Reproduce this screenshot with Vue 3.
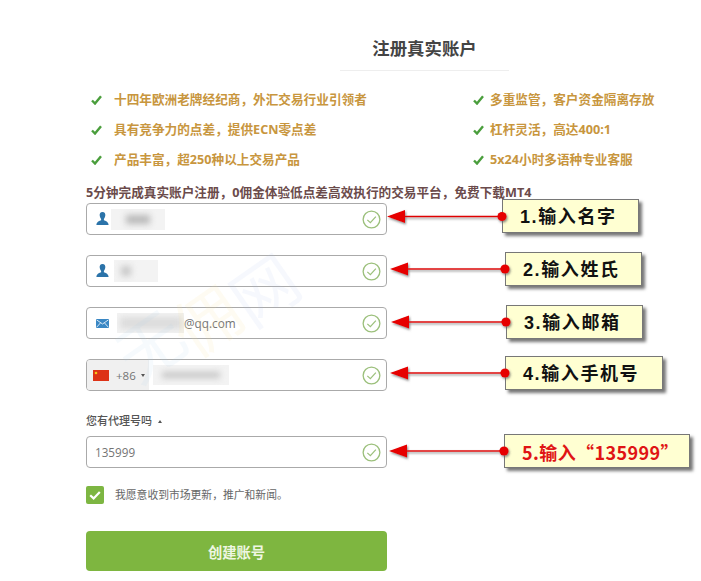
<template>
  <div class="page">
    <h1 class="title">注册真实账户</h1>

    <div class="features">
      <ul v-for="(col, i) in featureCols" :key="i" class="feature-col" :class="i ? 'right' : 'left'">
        <li v-for="text in col" :key="text" class="feature">
          <svg class="tick" viewBox="0 0 11 10" width="11" height="10">
            <path d="M1 5.5 L4 8.5 L10 1.2" fill="none" stroke="#4a9e3c" stroke-width="2.4" />
          </svg>
          <span class="feature-text">{{ text }}</span>
        </li>
      </ul>
    </div>

    <p class="promo">5分钟完成真实账户注册，0佣金体验低点差高效执行的交易平台，免费下载MT4</p>

    <form class="form" @submit.prevent>
      <div class="field">
        <svg class="icon user" viewBox="0 0 13 13" width="13" height="13">
          <path d="M6.5 0 C8.6 0 9.6 1.6 9.3 3.6 C9.1 5.1 8.5 6.2 7.9 6.9 L7.9 8.2 C9.6 8.9 12.4 9.5 12.6 13 L0.4 13 C0.6 9.5 3.4 8.9 5.1 8.2 L5.1 6.9 C4.5 6.2 3.9 5.1 3.7 3.6 C3.4 1.6 4.4 0 6.5 0 Z" fill="#2b73a9" />
        </svg>
        <span class="mask mask-first"><i></i></span>
        <svg class="ok" viewBox="0 0 20 20" width="19" height="19">
          <circle cx="10" cy="10" r="8.8" fill="none" stroke="#9cc07c" stroke-width="1.4" />
          <path d="M5.6 10.4 L8.8 13.4 L14.6 7" fill="none" stroke="#9cc07c" stroke-width="1.3" />
        </svg>
      </div>

      <div class="field">
        <svg class="icon user" viewBox="0 0 13 13" width="13" height="13">
          <path d="M6.5 0 C8.6 0 9.6 1.6 9.3 3.6 C9.1 5.1 8.5 6.2 7.9 6.9 L7.9 8.2 C9.6 8.9 12.4 9.5 12.6 13 L0.4 13 C0.6 9.5 3.4 8.9 5.1 8.2 L5.1 6.9 C4.5 6.2 3.9 5.1 3.7 3.6 C3.4 1.6 4.4 0 6.5 0 Z" fill="#2b73a9" />
        </svg>
        <span class="mask mask-last"><i></i></span>
        <svg class="ok" viewBox="0 0 20 20" width="19" height="19">
          <circle cx="10" cy="10" r="8.8" fill="none" stroke="#9cc07c" stroke-width="1.4" />
          <path d="M5.6 10.4 L8.8 13.4 L14.6 7" fill="none" stroke="#9cc07c" stroke-width="1.3" />
        </svg>
      </div>

      <div class="field">
        <svg class="icon" viewBox="0 0 13 9" width="13" height="9">
          <rect width="13" height="9" fill="#3a87c4" />
          <path d="M0.5 0.8 L6.5 5 L12.5 0.8 M0.5 8.4 L4.6 3.8 M12.5 8.4 L8.4 3.8" fill="none" stroke="#e6f1f9" stroke-width="0.9" />
        </svg>
        <span class="mask mask-mail"><i></i></span>
        <span class="value">@qq.com</span>
        <svg class="ok" viewBox="0 0 20 20" width="19" height="19">
          <circle cx="10" cy="10" r="8.8" fill="none" stroke="#9cc07c" stroke-width="1.4" />
          <path d="M5.6 10.4 L8.8 13.4 L14.6 7" fill="none" stroke="#9cc07c" stroke-width="1.3" />
        </svg>
      </div>

      <div class="field phone">
        <div class="prefix">
          <svg viewBox="0 0 16 11" width="16" height="11">
            <rect width="16" height="11" fill="#dd3216" />
            <circle cx="3" cy="3" r="1.3" fill="#f5c518" />
          </svg>
          <span class="code">+86</span>
          <span class="caret"></span>
        </div>
        <span class="mask mask-phone"><i></i></span>
        <svg class="ok" viewBox="0 0 20 20" width="19" height="19">
          <circle cx="10" cy="10" r="8.8" fill="none" stroke="#9cc07c" stroke-width="1.4" />
          <path d="M5.6 10.4 L8.8 13.4 L14.6 7" fill="none" stroke="#9cc07c" stroke-width="1.3" />
        </svg>
      </div>

      <div class="agent-label">您有代理号吗 <span class="caret-up"></span></div>

      <div class="field agent">
        <span class="value">135999</span>
        <svg class="ok" viewBox="0 0 20 20" width="19" height="19">
          <circle cx="10" cy="10" r="8.8" fill="none" stroke="#9cc07c" stroke-width="1.4" />
          <path d="M5.6 10.4 L8.8 13.4 L14.6 7" fill="none" stroke="#9cc07c" stroke-width="1.3" />
        </svg>
      </div>

      <div class="agree">
        <span class="box">
          <svg viewBox="0 0 18 18" width="18" height="18">
            <path d="M4.2 9.2 L7.6 12.4 L13.8 6" fill="none" stroke="#fff" stroke-width="2.2" />
          </svg>
        </span>
        <span>我愿意收到市场更新，推广和新闻。</span>
      </div>

      <button class="submit" type="submit">创建账号</button>
    </form>

    <!-- 水印 -->
    <span class="mark mark-a">无</span>
    <span class="mark mark-b">佣</span>
    <span class="mark mark-c">网</span>

    <!-- 标注 -->
    <div
      v-for="c in callouts"
      :key="c.text"
      class="callout"
      :class="{ hot: c.hot }"
      :style="{ left: c.x + 'px', top: c.y + 'px', width: c.w + 'px' }"
    >{{ c.text }}</div>

    <svg class="arrows" viewBox="0 0 701 581" width="701" height="581">
      <defs>
        <filter id="soft" x="-20%" y="-50%" width="140%" height="200%">
          <feDropShadow dx="1" dy="1.5" stdDeviation="0.8" flood-color="#555" flood-opacity="0.7" />
        </filter>
      </defs>
      <g v-for="c in callouts" :key="c.text" filter="url(#soft)">
        <line :x1="c.tip + 15" :y1="c.ay" :x2="c.x" :y2="c.ay" stroke="#e00000" stroke-width="1.4" />
        <path :d="`M${c.tip} ${c.ay} L${c.tip + 18} ${c.ay - 6.5} L${c.tip + 18} ${c.ay + 6.5} Z`" fill="#e60000" />
        <circle :cx="c.x" :cy="c.ay" r="4.6" fill="#e60000" />
      </g>
    </svg>
  </div>
</template>

<script setup>
const featureCols = [
  ['十四年欧洲老牌经纪商，外汇交易行业引领者', '具有竞争力的点差，提供ECN零点差', '产品丰富，超250种以上交易产品'],
  ['多重监管，客户资金隔离存放', '杠杆灵活，高达400:1', '5x24小时多语种专业客服']
]

const callouts = [
  { text: '1.输入名字', x: 502, y: 199, w: 137, tip: 387, ay: 216.5 },
  { text: '2.输入姓氏', x: 505, y: 252, w: 137, tip: 390, ay: 269 },
  { text: '3.输入邮箱', x: 506, y: 305, w: 137, tip: 391, ay: 322 },
  { text: '4.输入手机号', x: 505, y: 356, w: 158, tip: 390, ay: 373 },
  { text: '5.输入“135999”', x: 504, y: 434, w: 186, tip: 389, ay: 451, hot: true }
]
</script>

<style scoped>
.page {
  position: relative;
  width: 701px;
  height: 581px;
  overflow: hidden;
  background: #fff;
  font-family: "Open Sans", "Noto Sans CJK SC", sans-serif;
}

.title {
  width: 169px;
  margin: 0 0 0 340px;
  padding: 37px 0 11px;
  border-bottom: 1px solid #eee;
  font-size: 17.4px;
  line-height: 22px;
  font-weight: 700;
  color: #444;
  text-align: center;
}

.features {
  display: flex;
  margin: 14px 0 0 91px;
}

.feature-col {
  margin: 0;
  padding: 0;
  list-style: none;
}

.feature-col.left {
  width: 382px;
}

.feature {
  display: flex;
  align-items: center;
  height: 30px;
  font-size: 12.65px;
  font-weight: 700;
  color: #c8963e;
}

.feature-text {
  margin-bottom: 3px;
}

.left .tick {
  margin-right: 12px;
}

.right .tick {
  margin-right: 6px;
}

.promo {
  margin: 9px 0 0 86px;
  font-size: 12.65px;
  line-height: 16px;
  font-weight: 700;
  color: #6b4b4b;
  white-space: nowrap;
}

.form {
  width: 301px;
  margin: 3px 0 0 86px;
}

.field {
  display: flex;
  align-items: center;
  box-sizing: border-box;
  height: 32px;
  margin-bottom: 20px;
  padding: 0 5px 0 9px;
  border: 1px solid #aaa;
  border-radius: 4px;
  font-size: 11.8px;
  color: #747474;
}

.icon {
  flex: none;
}

.icon.user {
  margin-bottom: 2px;
}

.ok {
  flex: none;
  margin-left: auto;
}

.value {
  line-height: 20px;
}

.mask {
  display: flex;
  align-items: center;
  justify-content: center;
  flex: none;
  overflow: hidden;
  background: #f3f3f3;
}

.mask i {
  display: block;
  background: #b9b9b9;
  filter: blur(3px);
}

.mask-first {
  width: 54px;
  height: 21px;
  margin-left: 2px;
}

.mask-first i {
  width: 24px;
  height: 9px;
}

.mask-last {
  width: 44px;
  height: 22px;
  margin-left: 5px;
}

.mask-last i {
  width: 10px;
  height: 10px;
  margin-right: 20px;
  background: #c8c8c8;
}

.mask-mail {
  width: 67px;
  height: 20px;
  margin-left: 8px;
}

.mask-mail i {
  width: 62px;
  height: 12px;
  background: #dcdcdc;
}

.phone {
  padding-left: 0;
}

.prefix {
  display: flex;
  align-items: center;
  flex: none;
  align-self: stretch;
  box-sizing: border-box;
  width: 62px;
  padding-left: 6px;
  border-radius: 3px 0 0 3px;
  background: #f0f0f0;
}

.code {
  margin-left: 7px;
  font-size: 11.5px;
}

.caret {
  width: 0;
  height: 0;
  margin-left: 5px;
  border-top: 3px solid #555;
  border-left: 2.5px solid transparent;
  border-right: 2.5px solid transparent;
}

.mask-phone {
  width: 76px;
  height: 20px;
  margin-left: 4px;
}

.mask-phone i {
  width: 58px;
  height: 6px;
  background: #c4c4c4;
}

.agent-label {
  margin-top: 22px;
  font-size: 11px;
  line-height: 16px;
  font-weight: 500;
  color: #555;
}

.caret-up {
  display: inline-block;
  width: 0;
  height: 0;
  margin-left: 3px;
  vertical-align: 2px;
  border-bottom: 3px solid #555;
  border-left: 2.5px solid transparent;
  border-right: 2.5px solid transparent;
}

.agent {
  margin: 7px 0 0;
  padding-left: 8px;
}

.agent .value {
  font-size: 11.7px;
}

.agree {
  display: flex;
  align-items: center;
  margin-top: 18px;
  font-size: 10.8px;
  line-height: 18px;
  color: #666;
}

.box {
  flex: none;
  width: 18px;
  height: 18px;
  margin-right: 11px;
  border-radius: 2px;
  background: #7db642;
}

.box svg {
  display: block;
}

.submit {
  display: block;
  width: 100%;
  height: 40px;
  margin-top: 27px;
  border: 0;
  border-radius: 4px;
  background: #7eb640;
  font-family: inherit;
  font-size: 14.3px;
  font-weight: 700;
  color: #eef6e2;
}

.mark {
  position: absolute;
  font-size: 66px;
  line-height: 66px;
  font-weight: 400;
  transform: rotate(-35deg);
  pointer-events: none;
}

.mark-a {
  left: 117px;
  top: 312px;
  color: rgba(170, 205, 240, 0.1);
}

.mark-b {
  left: 173px;
  top: 287px;
  color: rgba(245, 220, 150, 0.12);
}

.mark-c {
  left: 231px;
  top: 256px;
  color: rgba(170, 190, 235, 0.1);
}

.callout {
  position: absolute;
  box-sizing: border-box;
  height: 34px;
  padding-left: 17px;
  border: 1px solid #777;
  background: #ffffd2;
  box-shadow: 3px 3px 3px #777;
  font-family: "Liberation Sans", "Noto Sans CJK SC", sans-serif;
  font-size: 18px;
  line-height: 35px;
  font-weight: 700;
  letter-spacing: 1.6px;
  color: #111;
  white-space: nowrap;
}

.callout.hot {
  font-family: "Noto Sans CJK SC", "Liberation Sans", sans-serif;
  letter-spacing: 0.4px;
  color: #e01414;
}

.arrows {
  position: absolute;
  left: 0;
  top: 0;
  pointer-events: none;
}
</style>
